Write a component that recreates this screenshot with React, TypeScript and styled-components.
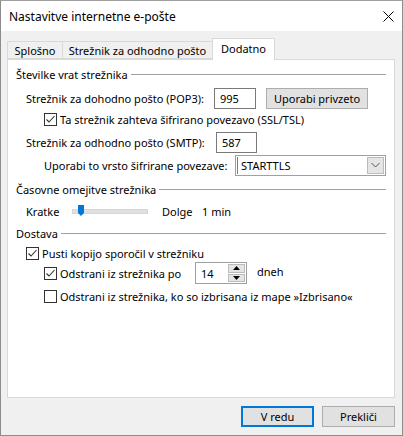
import React from "react";
import styled, { createGlobalStyle } from "styled-components";

const GlobalStyle = createGlobalStyle`
  html, body {
    margin: 0;
    padding: 0;
    background: #ffffff;
  }
  body {
    font-family: "Noto Sans", "Liberation Sans", sans-serif;
    font-size: 11px;
    color: #000000;
  }
`;

const Window = styled.div`
  width: 403px;
  height: 436px;
  box-sizing: border-box;
  border: 1px solid #8c8c8c;
  border-top-color: #a0a0a0;
  display: flex;
  flex-direction: column;
  background: #f0f0f0;
`;

const TitleBar = styled.div`
  height: 30px;
  background: #ffffff;
  display: flex;
  align-items: center;
  padding-left: 8px;
  font-size: 12px;
`;

const Title = styled.div`
  flex: 1;
`;

const CloseButton = styled.div`
  width: 46px;
  height: 30px;
  display: flex;
  align-items: center;
  justify-content: center;
  margin-right: -9px;
`;

const Body = styled.div`
  flex: 1;
  display: flex;
  flex-direction: column;
  padding: 7px 7px 0 6px;
`;

const TabStrip = styled.div`
  display: flex;
  align-items: flex-end;
  height: 21px;
  padding-left: 1px;
  position: relative;
  z-index: 1;
`;

const Tab = styled.div<{ $active?: boolean; $w: number }>`
  width: ${(p) => p.$w}px;
  height: ${(p) => (p.$active ? "22px" : "18px")};
  box-sizing: border-box;
  margin-bottom: ${(p) => (p.$active ? "-1px" : "0")};
  margin-left: -1px;
  padding-bottom: ${(p) => (p.$active ? "2px" : "0")};
  display: flex;
  align-items: center;
  justify-content: center;
  white-space: nowrap;
  background: ${(p) => (p.$active ? "#ffffff" : "#f0f0f0")};
  border: 1px solid #d9d9d9;
  border-bottom: ${(p) => (p.$active ? "none" : "1px solid #d9d9d9")};
`;

const Panel = styled.div`
  height: 339px;
  box-sizing: border-box;
  background: #ffffff;
  border: 1px solid #d9d9d9;
  padding: 6px 8px 0 8px;
  display: flex;
  flex-direction: column;
`;

const Legend = styled.div<{ $mt?: number }>`
  display: flex;
  align-items: center;
  height: 16px;
  white-space: nowrap;
  margin-top: ${(p) => p.$mt ?? 0}px;
  &::after {
    content: "";
    flex: 1;
    height: 1px;
    background: #a0a0a0;
    margin-left: 3px;
    margin-top: 1px;
  }
`;

const Row = styled.div<{ $mt?: number; $indent?: number; $h?: number }>`
  display: flex;
  align-items: center;
  height: ${(p) => p.$h ?? 22}px;
  margin-top: ${(p) => p.$mt ?? 0}px;
  padding-left: ${(p) => p.$indent ?? 0}px;
`;

const Label = styled.span<{ $w?: number; $dy?: number }>`
  display: inline-block;
  flex-shrink: 0;
  width: ${(p) => (p.$w ? `${p.$w}px` : "auto")};
  margin-top: ${(p) => p.$dy ?? 0}px;
  white-space: nowrap;
`;

const TextBox = styled.div<{ $w: number }>`
  width: ${(p) => p.$w}px;
  height: 21px;
  box-sizing: border-box;
  flex-shrink: 0;
  border: 1px solid #7a7a7a;
  background: #ffffff;
  display: flex;
  align-items: center;
  padding-left: 5px;
`;

const PushButton = styled.div<{ $w: number; $default?: boolean; $ml?: number }>`
  width: ${(p) => p.$w}px;
  height: 21px;
  box-sizing: border-box;
  flex-shrink: 0;
  margin-left: ${(p) => p.$ml ?? 0}px;
  background: #e1e1e1;
  border: ${(p) => (p.$default ? "2px solid #0078d7" : "1px solid #adadad")};
  display: flex;
  align-items: center;
  justify-content: center;
`;

const CheckBox = styled.div`
  width: 13px;
  height: 13px;
  box-sizing: border-box;
  border: 1px solid #333333;
  background: #ffffff;
  margin-right: 3px;
  display: flex;
  align-items: center;
  justify-content: center;
  flex-shrink: 0;
`;

const Select = styled.div`
  width: 151px;
  height: 21px;
  box-sizing: border-box;
  flex-shrink: 0;
  border: 1px solid #a0a0a0;
  padding: 1px;
  display: flex;
  align-items: stretch;
`;

const SelectText = styled.div`
  flex: 1;
  display: flex;
  align-items: center;
  padding-left: 3px;
  border-left: 1px solid #3c8ce0;
`;

const DropButton = styled.div`
  width: 17px;
  box-sizing: border-box;
  background: #e5e5e5;
  border: 1px solid #bcbcbc;
  display: flex;
  align-items: center;
  justify-content: center;
`;

const Track = styled.div`
  width: 74px;
  height: 3px;
  flex-shrink: 0;
  background: #e0e0e0;
  border: 1px solid #d6d6d6;
  position: relative;
  margin: 0 14px 0 8px;
`;

const Thumb = styled.svg`
  position: absolute;
  left: 5px;
  top: -5px;
`;

const Spin = styled.div`
  width: 52px;
  height: 22px;
  box-sizing: border-box;
  flex-shrink: 0;
  border: 1px solid #a0a0a0;
  display: flex;
  margin-right: 10px;
`;

const SpinText = styled.div`
  flex: 1;
  display: flex;
  align-items: center;
  padding-left: 5px;
`;

const SpinButtons = styled.div`
  width: 17px;
  display: flex;
  flex-direction: column;
  padding: 1px 1px 1px 0;
  gap: 1px;
`;

const SpinBtn = styled.div`
  flex: 1;
  background: #e5e5e5;
  border: 1px solid #bcbcbc;
  display: flex;
  align-items: center;
  justify-content: center;
`;

const Footer = styled.div`
  display: flex;
  justify-content: flex-end;
  gap: 8px;
  margin-top: 8px;
`;

const Check = ({ checked }: { checked?: boolean }) => (
  <CheckBox>
    {checked && (
      <svg width="11" height="11" viewBox="0 0 11 11">
        <path d="M1.5 5.5 L4 8 L9.5 2" fill="none" stroke="#333" strokeWidth="1.1" />
      </svg>
    )}
  </CheckBox>
);

export default function App() {
  return (
    <>
      <GlobalStyle />
      <Window>
        <TitleBar>
          <Title>Nastavitve internetne e-pošte</Title>
          <CloseButton>
            <svg width="11" height="11" viewBox="0 0 11 11">
              <path d="M0.5 0.5 L10.5 10.5 M10.5 0.5 L0.5 10.5" stroke="#000" strokeWidth="1" />
            </svg>
          </CloseButton>
        </TitleBar>
        <Body>
          <TabStrip>
            <Tab $w={56}>Splošno</Tab>
            <Tab $w={151}>Strežnik za odhodno pošto</Tab>
            <Tab $w={63} $active>Dodatno</Tab>
          </TabStrip>
          <Panel>
            <Legend>Številke vrat strežnika</Legend>
            <Row $mt={5} $indent={10}>
              <Label $w={188}>Strežnik za dohodno pošto (POP3):</Label>
              <TextBox $w={42}>995</TextBox>
              <PushButton $w={102} $ml={10}>Uporabi privzeto</PushButton>
            </Row>
            <Row $mt={1} $indent={28} $h={18}>
              <Check checked />
              <Label>Ta strežnik zahteva šifrirano povezavo (SSL/TSL)</Label>
            </Row>
            <Row $mt={3} $indent={10}>
              <Label $w={190}>Strežnik za odhodno pošto (SMTP):</Label>
              <TextBox $w={41}>587</TextBox>
            </Row>
            <Row $mt={1} $indent={28}>
              <Label $w={191}>Uporabi to vrsto šifrirane povezave:</Label>
              <Select>
                <SelectText>STARTTLS</SelectText>
                <DropButton>
                  <svg width="9" height="6" viewBox="0 0 9 6">
                    <path d="M0.5 1 L4.5 5 L8.5 1" fill="none" stroke="#555" strokeWidth="1" />
                  </svg>
                </DropButton>
              </Select>
            </Row>
            <Legend $mt={5}>Časovne omejitve strežnika</Legend>
            <Row $mt={5} $indent={10} $h={18}>
              <Label $w={38}>Kratke</Label>
              <Track>
                <Thumb width="6" height="11" viewBox="0 0 6 11">
                  <path d="M0 0 H6 V8 L3 11 L0 8 Z" fill="#0078d7" />
                </Thumb>
              </Track>
              <Label $w={40}>Dolge</Label>
              <Label>1 min</Label>
            </Row>
            <Legend $mt={5}>Dostava</Legend>
            <Row $mt={3} $indent={10} $h={18}>
              <Check checked />
              <Label>Pusti kopijo sporočil v strežniku</Label>
            </Row>
            <Row $indent={28}>
              <Check checked />
              <Label $w={135}>Odstrani iz strežnika po</Label>
              <Spin>
                <SpinText>14</SpinText>
                <SpinButtons>
                  <SpinBtn>
                    <svg width="7" height="4" viewBox="0 0 7 4">
                      <path d="M0 4 L3.5 0 L7 4 Z" fill="#000" />
                    </svg>
                  </SpinBtn>
                  <SpinBtn>
                    <svg width="7" height="4" viewBox="0 0 7 4">
                      <path d="M0 0 L3.5 4 L7 0 Z" fill="#000" />
                    </svg>
                  </SpinBtn>
                </SpinButtons>
              </Spin>
              <Label $dy={-4}>dneh</Label>
            </Row>
            <Row $mt={3} $indent={28} $h={18}>
              <Check />
              <Label>Odstrani iz strežnika, ko so izbrisana iz mape »Izbrisano«</Label>
            </Row>
          </Panel>
          <Footer>
            <PushButton $w={73} $default>V redu</PushButton>
            <PushButton $w={73}>Prekliči</PushButton>
          </Footer>
        </Body>
      </Window>
    </>
  );
}
